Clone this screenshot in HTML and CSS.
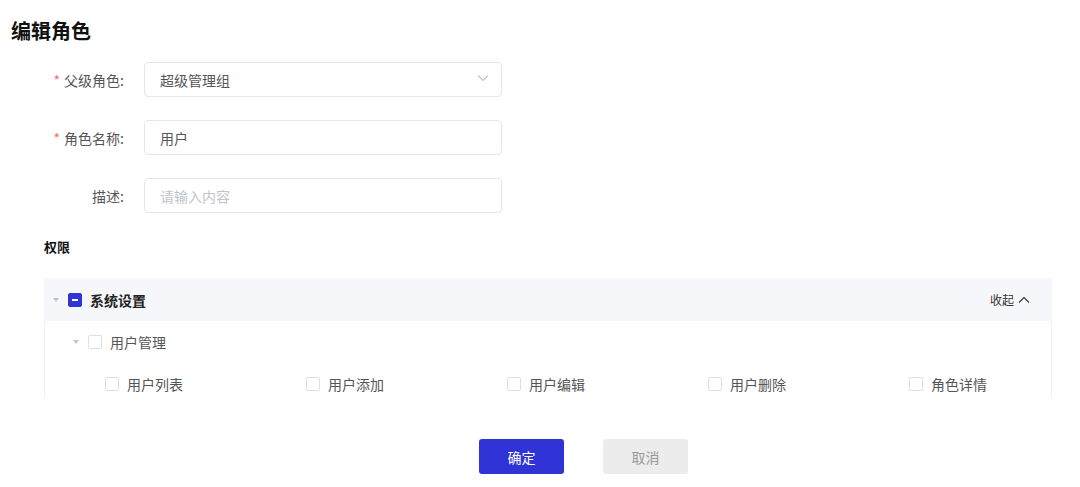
FILE: index.html
```html
<!DOCTYPE html>
<html lang="zh-CN">
<head>
    <meta charset="UTF-8">
    <title>编辑角色</title>
    <link rel="stylesheet" href="styles.css">
</head>
<body>
    <div class="page">
        <h1 class="page-title">编辑角色</h1>

        <form class="role-form">
            <div class="form-row">
                <label class="form-label required">父级角色:</label>
                <div class="form-input select">
                    <span>超级管理组</span>
                    <svg class="select-arrow" width="12" height="8" viewBox="0 0 12 8"><path d="M1 1.5 L6 6.5 L11 1.5" fill="none" stroke="#c0c4cc" stroke-width="1.1"/></svg>
                </div>
            </div>
            <div class="form-row">
                <label class="form-label required">角色名称:</label>
                <div class="form-input"><span>用户</span></div>
            </div>
            <div class="form-row">
                <label class="form-label">描述:</label>
                <div class="form-input"><span class="placeholder">请输入内容</span></div>
            </div>

            <div class="section-title">权限</div>

            <div class="tree">
                <div class="tree-head">
                    <div class="tree-node">
                        <span class="caret"></span>
                        <span class="check check-half"></span>
                        <span class="node-title">系统设置</span>
                    </div>
                    <a class="collapse-link">收起
                        <svg width="12" height="8" viewBox="0 0 12 8"><path d="M1 6.5 L6 1.5 L11 6.5" fill="none" stroke="#333" stroke-width="1.1"/></svg>
                    </a>
                </div>
                <div class="tree-body">
                    <div class="tree-node level-2">
                        <span class="caret"></span>
                        <span class="check"></span>
                        <span class="node-label">用户管理</span>
                    </div>
                    <div class="leaf-list">
                        <div class="leaf"><span class="check"></span><span class="node-label">用户列表</span></div>
                        <div class="leaf"><span class="check"></span><span class="node-label">用户添加</span></div>
                        <div class="leaf"><span class="check"></span><span class="node-label">用户编辑</span></div>
                        <div class="leaf"><span class="check"></span><span class="node-label">用户删除</span></div>
                        <div class="leaf"><span class="check"></span><span class="node-label">角色详情</span></div>
                    </div>
                </div>
            </div>

            <div class="form-actions">
                <button type="button" class="btn btn-primary">确定</button>
                <button type="button" class="btn btn-cancel">取消</button>
            </div>
        </form>
    </div>
</body>
</html>
```

FILE: styles.css
```css
body {
    margin: 0;
    background: #fff;
    font-family: "Noto Sans CJK SC", "Noto Sans", sans-serif;
    color: #333;
}

.page {
    padding: 17px 0 0 11px;
}

.page-title {
    margin: 0;
    font-size: 20px;
    line-height: 28px;
    font-weight: 700;
    color: #111;
}

.role-form {
    padding-left: 33px;
    margin-top: 17px;
}

.form-row {
    display: flex;
    align-items: center;
    margin-bottom: 23px;
}

.form-label {
    width: 80px;
    padding-right: 20px;
    text-align: right;
    font-size: 14px;
    color: #555;
}

.form-label.required::before {
    content: "*";
    color: #f56c6c;
    margin-right: 4px;
}

.form-input {
    box-sizing: border-box;
    width: 358px;
    height: 35px;
    border: 1px solid #e4e6ec;
    border-radius: 4px;
    padding: 0 15px;
    display: flex;
    align-items: center;
    justify-content: space-between;
    font-size: 14px;
    color: #555;
}

.placeholder {
    color: #c0c4cc;
}

.select-arrow {
    margin-right: -3px;
    margin-top: -4px;
}

.section-title {
    font-size: 13px;
    font-weight: 700;
    color: #111;
    padding-top: 2px;
    line-height: 18px;
}

.tree {
    width: 1008px;
    margin-top: 22px;
}

.tree-head {
    height: 43px;
    background: #f6f7fb;
    display: flex;
    align-items: center;
    justify-content: space-between;
    padding: 0 22px 0 8px;
}

.tree-node {
    display: flex;
    align-items: center;
}

.caret {
    width: 0;
    height: 0;
    border-left: 3.5px solid transparent;
    border-right: 3.5px solid transparent;
    border-top: 4px solid #c0c4cc;
    margin: 0 9px 0 1px;
}

.check {
    box-sizing: border-box;
    width: 14px;
    height: 14px;
    border: 1px solid #dcdfe6;
    border-radius: 2px;
    background: #fff;
    position: relative;
    flex-shrink: 0;
}

.check-half {
    background: #3033d6;
    border-color: #3033d6;
}

.check-half::after {
    content: "";
    position: absolute;
    left: 3px;
    right: 3px;
    top: 5px;
    height: 2px;
    background: #fff;
}

.node-title {
    margin-left: 8px;
    font-size: 14px;
    font-weight: 700;
    color: #222;
}

.node-label {
    margin-left: 8px;
    font-size: 14px;
    color: #555;
}

.collapse-link {
    display: flex;
    align-items: center;
    gap: 4px;
    font-size: 12px;
    color: #333;
}

.tree-body {
    height: 76px;
    overflow: hidden;
    border-left: 1px solid #eef0f5;
    border-right: 1px solid #eef0f5;
}

.tree-node.level-2 {
    height: 42px;
    padding-left: 27px;
}

.leaf-list {
    display: flex;
    padding-left: 60px;
    height: 42px;
    align-items: center;
}

.leaf {
    width: 201px;
    flex-shrink: 0;
    display: flex;
    align-items: center;
}

.form-actions {
    display: flex;
    gap: 39px;
    padding-left: 435px;
    margin-top: 42px;
}

.btn {
    width: 85px;
    height: 35px;
    border: none;
    border-radius: 3px;
    font-family: inherit;
    font-size: 14px;
    cursor: pointer;
}

.btn-primary {
    background: #3033d6;
    color: #fff;
}

.btn-cancel {
    background: #ececec;
    color: #999;
}
```
